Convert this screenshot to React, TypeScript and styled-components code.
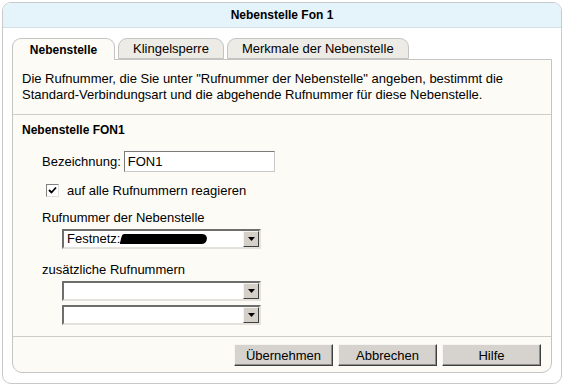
import React from 'react';
import styled, { createGlobalStyle } from 'styled-components';

const GlobalStyle = createGlobalStyle`
  html, body {
    margin: 0;
    padding: 0;
    background: #ffffff;
  }
  body {
    font-family: "Liberation Sans", Arial, sans-serif;
    font-size: 13px;
    color: #000;
  }
`;

const Frame = styled.div`
  margin: 2px;
  width: 558px;
  height: 380px;
  border: 1px solid #c9c9c9;
  border-radius: 9px;
  overflow: hidden;
  display: flex;
  flex-direction: column;
  background: #fff;
`;

const TitleBar = styled.div`
  height: 24px;
  background: #e5f3fb;
  border-bottom: 1px solid #d3dde3;
  display: flex;
  align-items: center;
  justify-content: center;
  font-weight: bold;
  font-size: 12px;
`;

const Body = styled.div`
  flex: 1;
  display: flex;
  flex-direction: column;
  padding: 10px 9px 10px 9px;
`;

const TabRow = styled.div`
  display: flex;
  gap: 3px;
  height: 21px;
`;

const Tab = styled.div<{ $active?: boolean }>`
  box-sizing: border-box;
  width: ${(p) => (p.$active ? '103px' : 'auto')};
  padding: 0 14px;
  height: ${(p) => (p.$active ? '22px' : '21px')};
  display: flex;
  align-items: center;
  justify-content: center;
  border: 1px solid #c4c4c4;
  border-bottom: ${(p) => (p.$active ? 'none' : '1px solid #c4c4c4')};
  border-radius: 9px 9px 0 0;
  background: ${(p) => (p.$active ? '#fdfbf6' : '#ecebe6')};
  font-weight: ${(p) => (p.$active ? 'bold' : 'normal')};
  font-size: ${(p) => (p.$active ? '12px' : '13px')};
  position: relative;
  z-index: ${(p) => (p.$active ? 1 : 0)};
`;

const Panel = styled.div`
  flex: 1;
  background: #fdfbf6;
  border: 1px solid #c4c4c4;
  border-radius: 0 0 10px 10px;
  display: flex;
  flex-direction: column;
  width: 540px;
  box-sizing: border-box;
`;

const Info = styled.div`
  box-sizing: border-box;
  padding: 11px 9px 0 9px;
  height: 55px;
  line-height: 16px;
  border-bottom: 1px solid #cfcdc8;
`;

const Section = styled.div`
  padding: 7px 9px 0 9px;
  display: flex;
  flex-direction: column;
  height: 222px;
  border-bottom: 1px solid #cfcdc8;
  box-sizing: border-box;
`;

const SectionTitle = styled.div`
  font-weight: bold;
  font-size: 12px;
  line-height: 16px;
`;

const Row = styled.div<{ $indent: number; $top: number }>`
  display: flex;
  align-items: center;
  padding-left: ${(p) => p.$indent}px;
  margin-top: ${(p) => p.$top}px;
`;

const TextInput = styled.div`
  box-sizing: border-box;
  width: 151px;
  height: 21px;
  margin-left: 3px;
  border: 1px solid #7a7a7a;
  border-right-color: #c9c9c9;
  border-bottom-color: #c9c9c9;
  background: #fff;
  padding: 2px 3px;
  line-height: 15px;
`;

const CheckBox = styled.span`
  box-sizing: border-box;
  width: 13px;
  height: 13px;
  border: 1px solid #808080;
  border-right-color: #e0e0e0;
  border-bottom-color: #e0e0e0;
  background: #fff;
  display: flex;
  align-items: center;
  justify-content: center;
  margin-right: 8px;
`;

const Select = styled.div`
  box-sizing: border-box;
  width: 199px;
  height: 20px;
  border: 2px solid;
  border-color: #6e6e6e #e4e2dc #e4e2dc #6e6e6e;
  background: #fff;
  display: flex;
  align-items: stretch;
`;

const SelectValue = styled.div`
  flex: 1;
  padding-left: 3px;
  display: flex;
  align-items: center;
  line-height: 14px;
`;

const DropButton = styled.div`
  box-sizing: border-box;
  width: 16px;
  background: #d4d0c8;
  border: 1px solid;
  border-color: #f4f3ef #404040 #404040 #f4f3ef;
  display: flex;
  align-items: center;
  justify-content: center;
`;

const Redaction = styled.span`
  display: inline-block;
  width: 86px;
  height: 10px;
  background: #000;
  border-radius: 2px 6px 4px 1px;
  transform: skewX(-15deg);
  margin-left: 1px;
`;

const SelectStack = styled.div`
  display: flex;
  flex-direction: column;
  gap: 4px;
  padding-left: 40px;
  margin-top: 4px;
`;

const ButtonBar = styled.div`
  display: flex;
  justify-content: flex-end;
  gap: 5px;
  padding: 7px 10px 0 0;
`;

const Button = styled.div`
  box-sizing: border-box;
  width: 99px;
  height: 22px;
  background: #d6d3ce;
  border: 1px solid;
  border-color: #f5f4f1 #404040 #404040 #f5f4f1;
  box-shadow: inset -1px -1px 0 #8e8c88;
  display: flex;
  align-items: center;
  justify-content: center;
`;

function Arrow() {
  return (
    <svg width="7" height="4" viewBox="0 0 7 4">
      <path d="M0 0H7L3.5 4Z" fill="#000" />
    </svg>
  );
}

function Check() {
  return (
    <svg width="9" height="9" viewBox="0 0 9 9">
      <path d="M1 4L3.5 6.5L8 1.5" stroke="#000" strokeWidth="1.8" fill="none" />
    </svg>
  );
}

function DropDown({ children }: { children?: React.ReactNode }) {
  return (
    <Select>
      <SelectValue>{children}</SelectValue>
      <DropButton>
        <Arrow />
      </DropButton>
    </Select>
  );
}

export default function App() {
  return (
    <>
      <GlobalStyle />
      <Frame>
        <TitleBar>Nebenstelle Fon 1</TitleBar>
        <Body>
          <TabRow>
            <Tab $active>Nebenstelle</Tab>
            <Tab>Klingelsperre</Tab>
            <Tab>Merkmale der Nebenstelle</Tab>
          </TabRow>
          <Panel>
            <Info>
              Die Rufnummer, die Sie unter "Rufnummer der Nebenstelle" angeben, bestimmt die
              <br />
              Standard-Verbindungsart und die abgehende Rufnummer für diese Nebenstelle.
            </Info>
            <Section>
              <SectionTitle>Nebenstelle FON1</SectionTitle>
              <Row $indent={20} $top={13}>
                Bezeichnung:
                <TextInput>FON1</TextInput>
              </Row>
              <Row $indent={24} $top={11}>
                <CheckBox>
                  <Check />
                </CheckBox>
                auf alle Rufnummern reagieren
              </Row>
              <Row $indent={20} $top={12}>Rufnummer der Nebenstelle</Row>
              <SelectStack>
                <DropDown>
                  Festnetz:
                  <Redaction />
                </DropDown>
              </SelectStack>
              <Row $indent={20} $top={13}>zusätzliche Rufnummern</Row>
              <SelectStack>
                <DropDown />
                <DropDown />
              </SelectStack>
            </Section>
            <ButtonBar>
              <Button>Übernehmen</Button>
              <Button>Abbrechen</Button>
              <Button>Hilfe</Button>
            </ButtonBar>
          </Panel>
        </Body>
      </Frame>
    </>
  );
}
